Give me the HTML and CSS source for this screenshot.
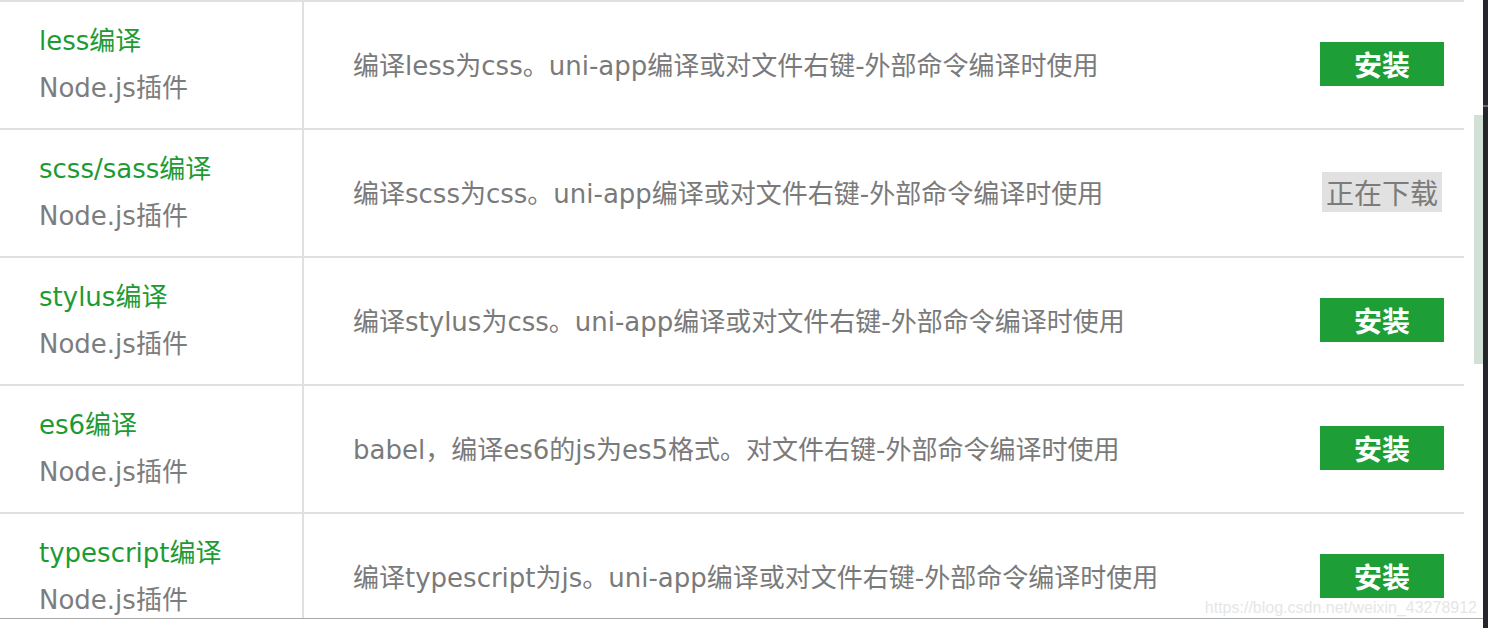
FILE: index.html
```html
<!DOCTYPE html>
<html lang="zh-CN">
<head>
<meta charset="utf-8">
<title>插件安装</title>
<link rel="stylesheet" href="styles.css">
</head>
<body>
<div class="screen">
  <div class="pane">
    <div class="list">
      <div class="row">
        <div class="name-cell">
          <div class="title">less编译</div>
          <div class="sub">Node.js插件</div>
        </div>
        <div class="desc-cell">编译less为css。uni-app编译或对文件右键-外部命令编译时使用</div>
        <div class="action-cell"><span class="btn-install">安装</span></div>
      </div>
      <div class="row">
        <div class="name-cell">
          <div class="title">scss/sass编译</div>
          <div class="sub">Node.js插件</div>
        </div>
        <div class="desc-cell">编译scss为css。uni-app编译或对文件右键-外部命令编译时使用</div>
        <div class="action-cell"><span class="btn-loading">正在下载</span></div>
      </div>
      <div class="row">
        <div class="name-cell">
          <div class="title">stylus编译</div>
          <div class="sub">Node.js插件</div>
        </div>
        <div class="desc-cell">编译stylus为css。uni-app编译或对文件右键-外部命令编译时使用</div>
        <div class="action-cell"><span class="btn-install">安装</span></div>
      </div>
      <div class="row">
        <div class="name-cell">
          <div class="title">es6编译</div>
          <div class="sub">Node.js插件</div>
        </div>
        <div class="desc-cell">babel，编译es6的js为es5格式。对文件右键-外部命令编译时使用</div>
        <div class="action-cell"><span class="btn-install">安装</span></div>
      </div>
      <div class="row">
        <div class="name-cell">
          <div class="title">typescript编译</div>
          <div class="sub">Node.js插件</div>
        </div>
        <div class="desc-cell">编译typescript为js。uni-app编译或对文件右键-外部命令编译时使用</div>
        <div class="action-cell"><span class="btn-install">安装</span></div>
      </div>
    </div>
    <div class="track"><div class="thumb"></div></div>
    <div class="watermark">https://blog.csdn.net/weixin_43278912</div>
  </div>
  <div class="edge"><div class="edge-mark"></div></div>
</div>
</body>
</html>
```

FILE: styles.css
```css
html, body {
  margin: 0;
  padding: 0;
  background: #ffffff;
}
body {
  width: 1488px;
  height: 628px;
  overflow: hidden;
  font-family: "DejaVu Sans", "Noto Sans CJK SC", sans-serif;
}
.screen {
  display: flex;
  width: 1488px;
  height: 628px;
}
.pane {
  position: relative;
  display: flex;
  width: 1483px;
  height: 618px;
  border-bottom: 1px solid #a9a9a9;
  overflow: hidden;
  background: #ffffff;
}
.list {
  width: 1464px;
  display: flex;
  flex-direction: column;
  flex-shrink: 0;
}
.row {
  display: flex;
  flex-shrink: 0;
  height: 126px;
  border-top: 2px solid #e0e0e0;
}
.name-cell {
  width: 263px;
  padding-left: 39px;
  border-right: 2px solid #e0e0e0;
  display: flex;
  flex-direction: column;
  justify-content: center;
  font-size: 26px;
  line-height: 47px;
}
.title {
  color: #1c9b34;
}
.sub {
  color: #7d7d7d;
}
.desc-cell {
  flex: 1;
  padding-left: 49px;
  padding-bottom: 4px;
  display: flex;
  align-items: center;
  font-size: 26px;
  color: #7a7a7a;
  white-space: nowrap;
}
.action-cell {
  width: 164px;
  padding-bottom: 2px;
  display: flex;
  align-items: center;
  justify-content: center;
}
.btn-install {
  display: block;
  width: 124px;
  height: 44px;
  line-height: 44px;
  text-align: center;
  background: #1e9e37;
  color: #ffffff;
  font-weight: bold;
  font-size: 28px;
  font-family: "Noto Sans CJK SC", sans-serif;
}
.btn-loading {
  display: block;
  width: 120px;
  height: 40px;
  line-height: 40px;
  text-align: center;
  background: #e1e1e1;
  color: #7b7b7b;
  font-size: 28px;
  font-family: "Noto Sans CJK SC", sans-serif;
}
.track {
  width: 19px;
  flex-shrink: 0;
  padding-top: 115px;
  display: flex;
  justify-content: flex-end;
  align-items: flex-start;
}
.thumb {
  width: 9px;
  height: 249px;
  background: #d3e0d5;
}
.watermark {
  position: absolute;
  right: 6px;
  bottom: 0;
  font-family: "Liberation Sans", Arial, sans-serif;
  font-size: 16px;
  line-height: 20px;
  color: #e6e6e6;
}
.edge {
  width: 5px;
  height: 628px;
  background: #24262b;
  padding-top: 105px;
  box-sizing: border-box;
}
.edge-mark {
  height: 2px;
  background: #6b6d72;
}
```
